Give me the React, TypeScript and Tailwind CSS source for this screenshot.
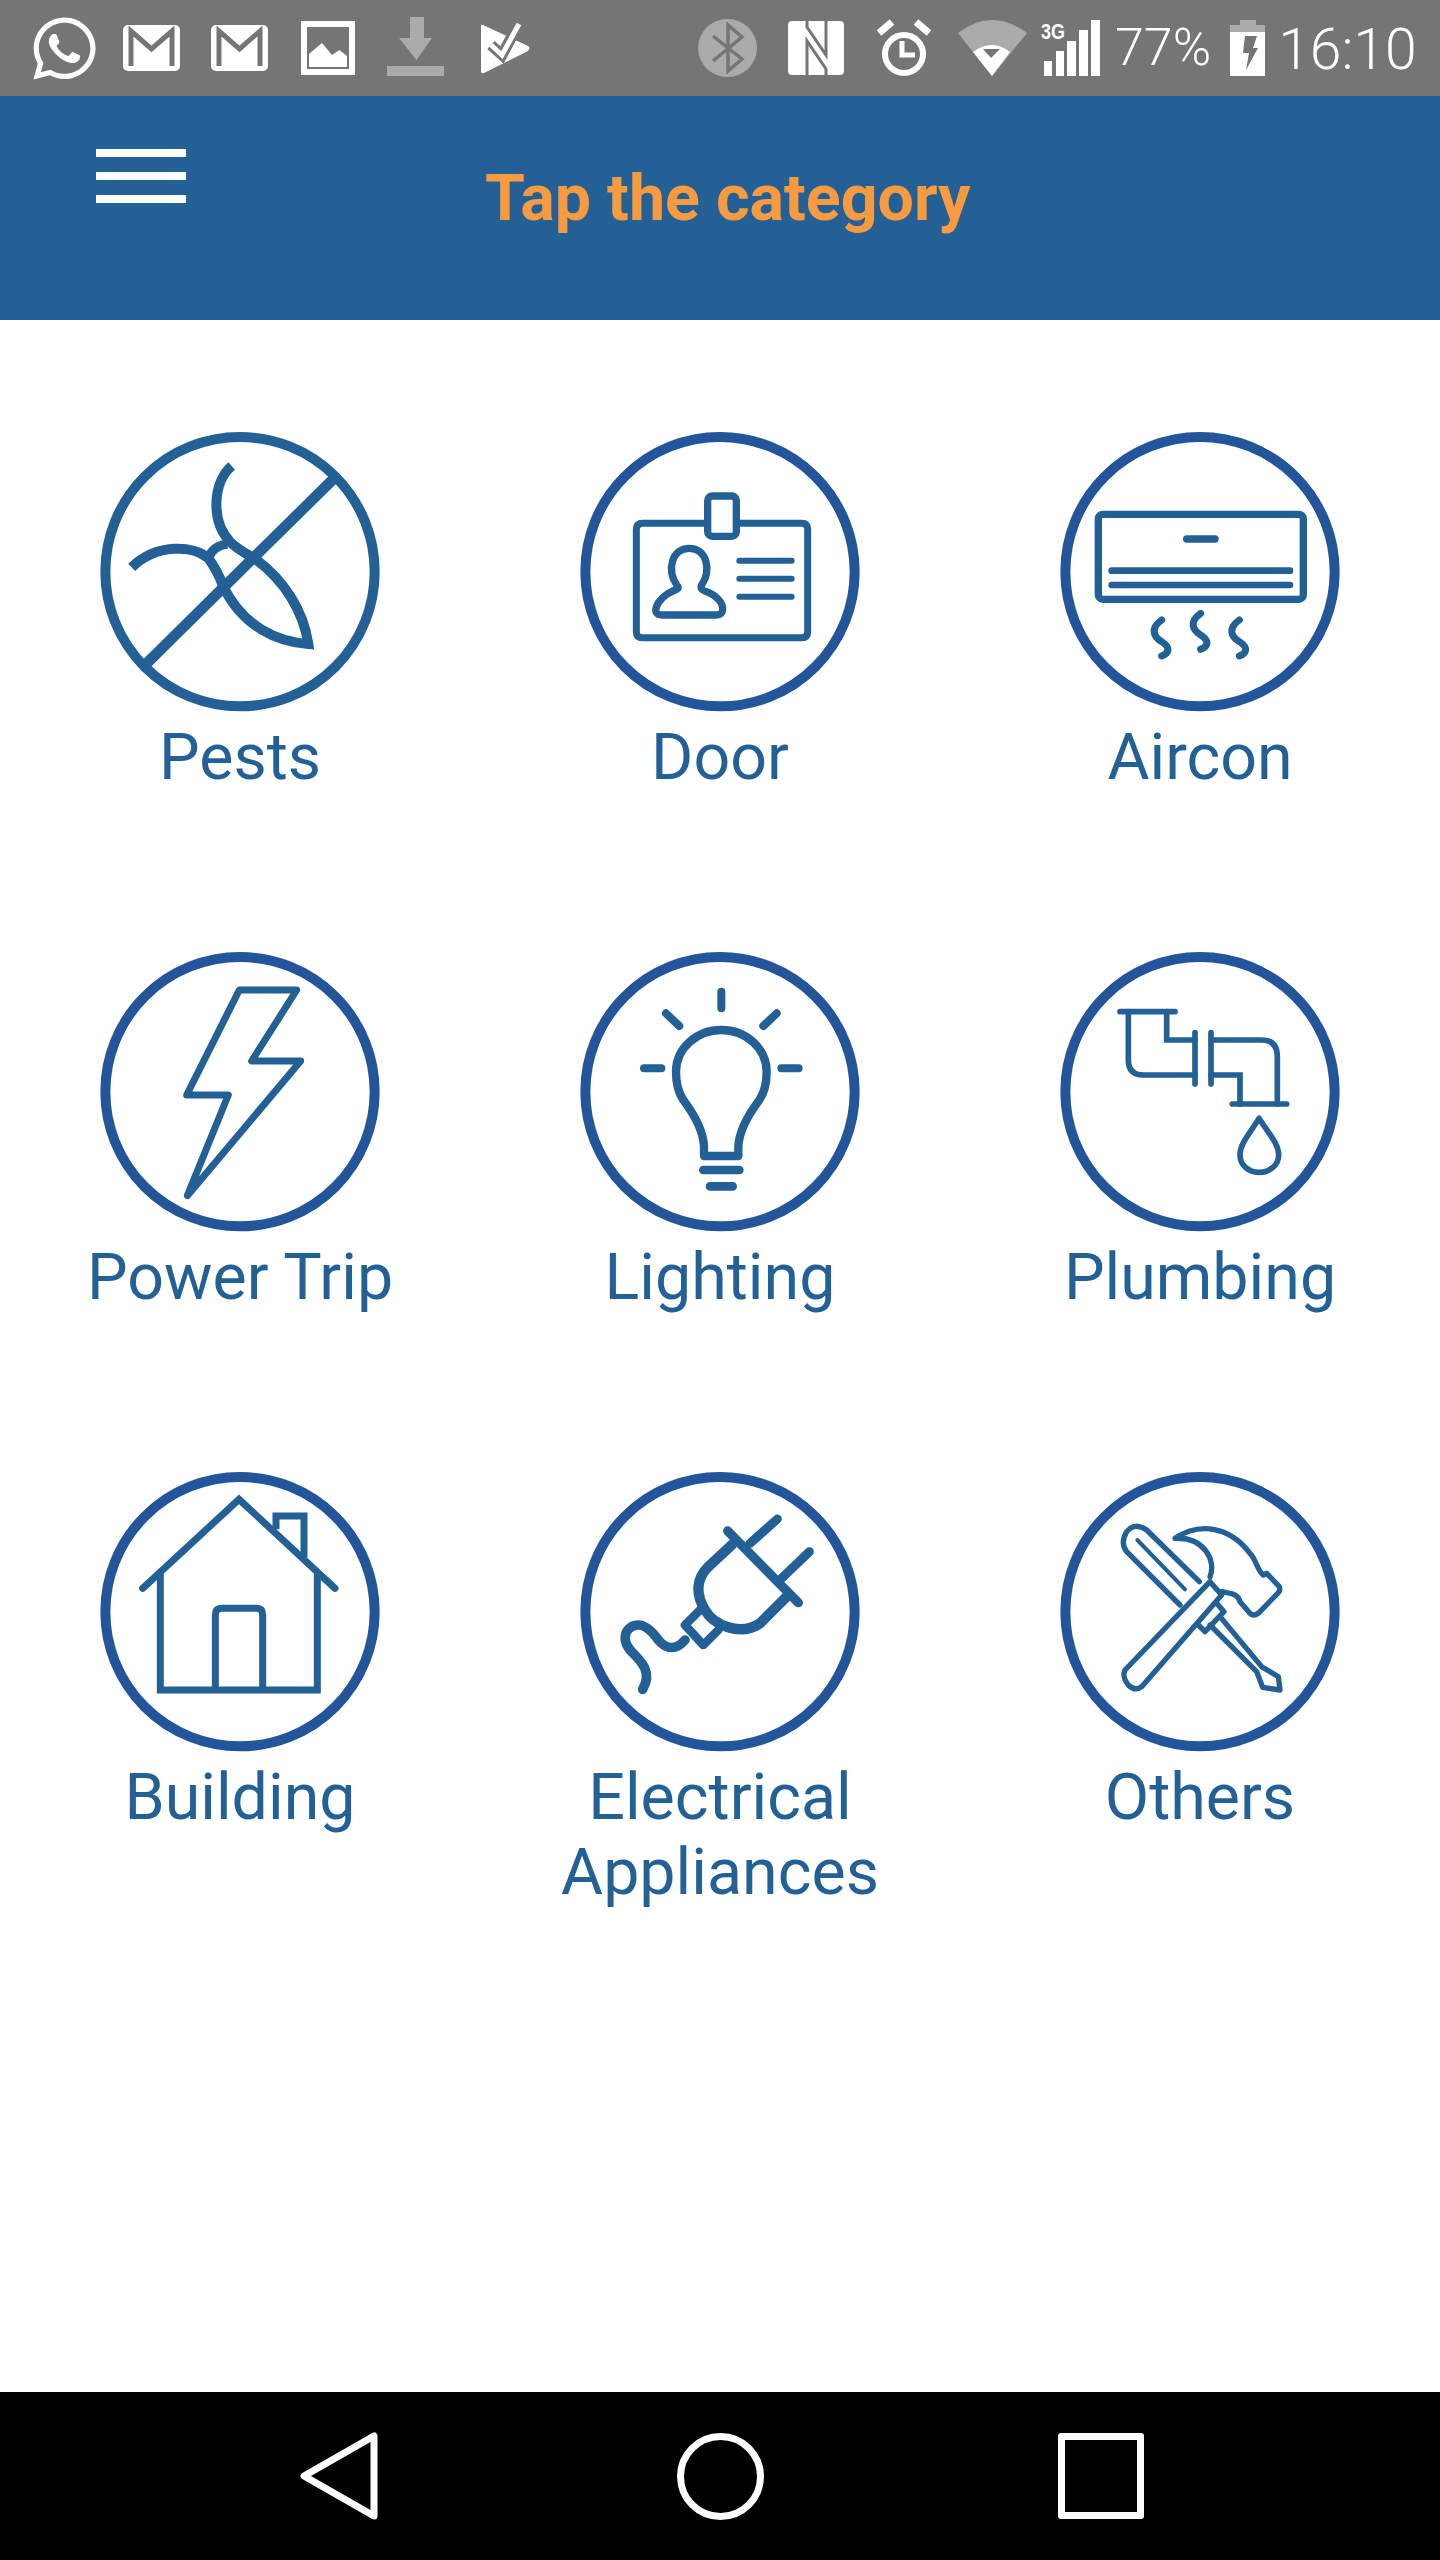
import React from "react";
import { FaWhatsapp } from "react-icons/fa";

const ICON = "#236096";
const RING = "#22559a";
const GREY = "#757575";
const SOFT = "#ababab";

function Gmail({ className }: { className: string }) {
  return (
    <svg className={className} width="57" height="46" viewBox="0 0 57 46">
      <rect width="57" height="46" rx="5" fill="#fff" />
      <path d="M8 41V6L28.5 24L49 6V41" fill="none" stroke={GREY} strokeWidth="5" />
    </svg>
  );
}

function StatusBar() {
  return (
    <div className="flex h-[96px] shrink-0 items-start bg-[#757575] pl-[33px] text-white">
      <FaWhatsapp className="mt-[13px] h-[71px] w-[63px] shrink-0" />
      <Gmail className="ml-[27px] mt-[25px] shrink-0" />
      <Gmail className="ml-[31px] mt-[25px] shrink-0" />
      <svg className="ml-[33px] mt-[21px] shrink-0" width="54" height="54" viewBox="0 0 54 54">
        <rect x="3" y="3" width="48" height="48" fill={GREY} stroke="#fff" strokeWidth="6" />
        <path d="M8 33L21 22L31 34L38.500 29L46 35V46H8Z" fill="#fff" />
      </svg>
      <svg className="ml-[32px] mt-[17px] shrink-0" width="57" height="59" viewBox="0 0 57 59">
        <path d="M23 0H37V21H45L29.500 43L12 21H23Z" fill={SOFT} />
        <rect y="49" width="57" height="10" fill={SOFT} />
      </svg>
      <svg className="ml-[37px] mt-[22px] shrink-0" width="50" height="52" viewBox="0 0 50 52">
        <path d="M2 3L47 24Q50 26 47 29L3 51Q0 52 0 49V4Q0 2 2 3Z" fill="#fff" />
        <path d="M10 23L21 33L37 3" fill="none" stroke={GREY} strokeWidth="11" />
        <path d="M10 23L21 33L38 2" fill="none" stroke="#fff" strokeWidth="5" />
      </svg>
      <svg className="ml-[167px] mt-[19px] shrink-0" width="59" height="58" viewBox="0 0 59 58">
        <ellipse cx="29.500" cy="29" rx="29.500" ry="29" fill={SOFT} />
        <path d="M15 17L44 40L30 52V6L44 18L15 42" fill="none" stroke={GREY} strokeWidth="3.500" />
      </svg>
      <svg className="ml-[31px] mt-[21px] shrink-0" width="56" height="54" viewBox="0 0 56 54">
        <rect width="56" height="54" rx="4" fill="#fff" />
        <path d="M19 54V20L38 48V54M38 0V34L19 6V0" fill="none" stroke={GREY} strokeWidth="3" />
      </svg>
      <svg className="ml-[32px] mt-[18px] shrink-0" width="56" height="58" viewBox="0 0 56 58">
        <circle cx="28" cy="36" r="19" fill="none" stroke="#fff" strokeWidth="6" />
        <path d="M26 23V37H39" fill="none" stroke="#fff" strokeWidth="5" />
        <path d="M3 15L16 4M40 4L53 15" fill="none" stroke="#fff" strokeWidth="7" />
      </svg>
      <svg className="ml-[26px] mt-[20px] shrink-0" width="69" height="56" viewBox="0 0 69 56">
        <path d="M34 56L0 13Q34 -13 69 13Z" fill={SOFT} />
        <path d="M34 56L15 32Q34 18 52 32Z" fill="#fff" />
        <path d="M25 29H42L33 38Z" fill={GREY} />
      </svg>
      <svg className="ml-[14px] mt-[20px] shrink-0" width="60" height="56" viewBox="0 0 60 56">
        <text x="0" y="19" fontFamily="'Liberation Sans', sans-serif" fontWeight="700" fontSize="22" fill="#fff" textLength="24" lengthAdjust="spacingAndGlyphs">3G</text>
        <path d="M3 41H11V56H3ZM15 31H23V56H15ZM26 21H35V56H26ZM38 10H47V56H38ZM50 0H59V56H50Z" fill="#fff" />
      </svg>
      <span className="ml-[14px] mt-[17px] font-['Roboto',sans-serif] text-[52px] font-light leading-[62px]">77%</span>
      <svg className="ml-[19px] mt-[20px] shrink-0" width="35" height="56" viewBox="0 0 35 56">
        <path d="M10 0H26V5H35V12H0V5H10Z" fill={SOFT} />
        <path d="M0 12H35V56H0Z" fill="#fff" />
        <path d="M15 16H27L23 28H28L16 50L19 33H13Z" fill={GREY} />
      </svg>
      <span className="ml-[13px] mt-[19px] font-['Roboto',sans-serif] text-[57px] font-light leading-[62px]">16:10</span>
    </div>
  );
}

function Header() {
  return (
    <header className="flex h-[224px] shrink-0 items-start bg-[#236096] pl-[96px]">
      <div className="mt-[53px] flex w-[90px] flex-col gap-[15px]">
        <div className="h-[8px] bg-white" />
        <div className="h-[8px] bg-white" />
        <div className="h-[8px] bg-white" />
      </div>
      <h1 className="ml-[299px] mt-[65px] font-['Roboto',sans-serif] text-[64.5px] font-bold leading-[74px] text-[#f79a40]">
        Tap the category
      </h1>
    </header>
  );
}

const glyphs: Record<string, React.ReactNode> = {
  Pests: (
    <g fill="none" strokeMiterlimit="10">
      <path d="M200 760L762 205" strokeWidth="32" />
      <path
        d="M455 168C400 215 390 330 450 395C480 425 510 435 530 450C610 510 670 600 685 702C590 695 490 650 430 530C415 490 400 465 385 445C340 405 230 400 155 472"
        strokeWidth="30"
      />
      <path d="M385 445C395 415 420 405 442 402" strokeWidth="28" />
    </g>
  ),
  Door: (
    <g fill="none" strokeLinecap="round" strokeLinejoin="round">
      <rect x="443" y="258" width="86" height="121" rx="14" strokeWidth="22" />
      <path d="M437 340H248Q229 340 229 358V665Q229 683 248 683H725Q743 683 743 665V358Q743 340 725 340H537" strokeWidth="21" />
      <path
        d="M350 525C320 480 335 415 388 415C440 415 455 480 425 525C420 535 425 540 440 545C465 555 490 575 488 600C487 610 480 615 470 615H305C290 615 285 605 288 595C295 570 320 550 345 540C355 537 358 533 350 525Z"
        strokeWidth="22"
      />
      <path d="M538 452H695M538 506H695M538 560H695" strokeWidth="18" />
    </g>
  ),
  Aircon: (
    <g fill="none" strokeLinecap="round" strokeLinejoin="round">
      <rect x="175" y="313" width="615" height="255" rx="14" strokeWidth="22" />
      <path d="M440 387H525" strokeWidth="22" />
      <path d="M215 482H750M215 525H750" strokeWidth="20" />
      <path d="M365 630C330 655 340 680 365 695C395 715 385 730 365 738M482 610C447 635 457 660 482 675C512 695 502 710 482 718M598 630C563 655 573 680 598 695C628 715 618 730 598 738" strokeWidth="21" />
    </g>
  ),
  "Power Trip": <path d="M478 180H650L515 393H662L322 797L445 495H320Z" fill="none" strokeWidth="21" strokeLinejoin="round" />,
  Lighting: (
    <g fill="none" strokeLinecap="round" strokeLinejoin="round">
      <path d="M484 185V235M318 250L358 288M650 250L610 288M252 415H304M664 415H716" strokeWidth="24" />
      <path d="M432 678V650C430 600 400 550 370 510C350 480 348 450 348 425C348 355 410 300 484 300C558 300 620 355 620 425C620 450 618 480 598 510C568 550 537 600 535 650V678Z" strokeWidth="25" />
      <path d="M430 720H538M450 769H518" strokeWidth="26" />
    </g>
  ),
  Plumbing: (
    <g fill="none" strokeLinecap="round">
      <path d="M240 245H405M465 308V462M513 308V462M577 522H740" strokeWidth="17" />
      <path d="M265 245V390Q265 435 310 435H465M380 245V330H465M513 330H665Q712 330 712 380V522M513 435H600V522" strokeWidth="17" />
      <path d="M657 565C630 610 600 640 600 675C600 705 625 727 657 727C690 727 716 705 716 675C716 640 685 610 657 565Z" strokeWidth="17" strokeLinejoin="round" />
    </g>
  ),
  Building: (
    <g fill="none">
      <path d="M188 415L477 148L765 415" strokeWidth="21" strokeLinecap="round" />
      <path d="M241 372V720H712V372M406 720V495Q406 475 425 475H530Q548 475 548 495V720M588 238V198H672V322" strokeWidth="21" />
    </g>
  ),
  "Electrical Appliances": (
    <g fill="none" strokeLinecap="round" strokeLinejoin="round">
      <path d="M570 280L652 207M665 385L748 305" strokeWidth="27" />
      <path d="M503 243L715 458" strokeWidth="28" />
      <path d="M515 285L445 350C410 385 405 430 435 480C460 525 540 560 600 520L680 440" strokeWidth="31" />
      <path d="M420 480L375 525L430 585L475 540" strokeWidth="26" />
      <path d="M375 570C350 600 320 600 295 570C270 535 245 515 215 530C190 545 190 575 210 600C240 630 280 665 248 718" strokeWidth="29" />
    </g>
  ),
  Others: (
    <g fill="none" strokeLinejoin="round" strokeLinecap="round" strokeWidth="16">
      <path d="M255 660L510 395L545 435L305 710Q285 725 265 705Q245 680 255 660Z" />
      <path d="M510 380C530 330 490 260 405 265C480 215 570 230 630 310C650 330 650 360 670 375L680 370L718 410Q722 420 715 428L655 490Q640 500 630 490L600 455C595 430 570 430 545 425" />
      <path d="M420 465L260 305Q240 280 260 245Q285 215 320 240L478 395" />
      <path d="M292 270L435 418" strokeWidth="12" />
      <path d="M530 460L552 485L495 545L475 525M510 525L650 665M540 500L665 650M650 665L668 712L720 720L715 680L665 650" />
    </g>
  ),
};

const items = ["Pests", "Door", "Aircon", "Power Trip", "Lighting", "Plumbing", "Building", "Electrical Appliances", "Others"];

function Category({ name }: { name: string }) {
  return (
    <div className="flex flex-col items-center">
      <svg className="h-[310px] w-[320px] shrink-0" viewBox="0 0 960 930" stroke={ICON}>
        <circle cx="480" cy="485" r="404" fill="none" stroke={name === "Pests" ? ICON : RING} strokeWidth="30" />
        {glyphs[name]}
      </svg>
      <div className="w-[340px] text-center font-['Roboto',sans-serif] text-[64.5px] leading-[75px] text-[#236096]">{name}</div>
    </div>
  );
}

function NavBar() {
  return (
    <nav className="flex h-[168px] shrink-0 items-center bg-black pl-[300px]">
      <svg width="78" height="88" viewBox="0 0 78 88">
        <path d="M74 4V84L4 44Z" fill="none" stroke="#fff" strokeWidth="7" strokeLinejoin="round" />
      </svg>
      <div className="ml-[299px] h-[87px] w-[87px] rounded-full border-[7px] border-white" />
      <div className="ml-[294px] h-[86px] w-[86px] rounded-[3px] border-[7px] border-white" />
    </nav>
  );
}

export default function App() {
  return (
    <div className="flex h-[2560px] w-[1440px] flex-col bg-white">
      <StatusBar />
      <Header />
      <main className="grid flex-1 auto-rows-[520px] grid-cols-3 content-start pt-[90px]">
        {items.map((n) => (
          <Category key={n} name={n} />
        ))}
      </main>
      <NavBar />
    </div>
  );
}
